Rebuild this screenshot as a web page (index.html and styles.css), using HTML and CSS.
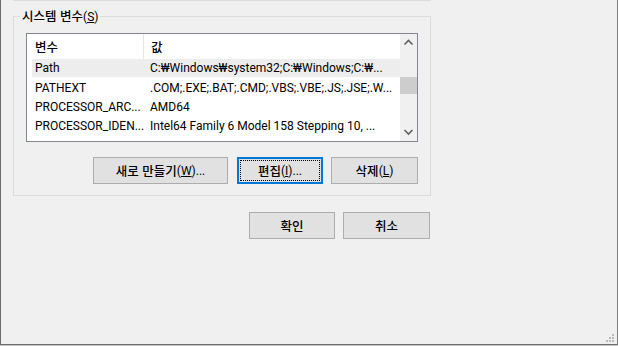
FILE: index.html
```html
<!DOCTYPE html>
<html lang="ko">
<head>
<meta charset="utf-8">
<link rel="stylesheet" href="styles.css">
</head>
<body>
<div class="window">
  <div class="prev-group"></div>
  <div class="group">
    <div class="group-title"><span class="ko">시스템 변수</span>(<u>S</u>)</div>
    <div class="list">
      <div class="list-body">
        <div class="header">
          <div class="hcol1"><span class="ko">변수</span></div>
          <div class="hcol2"><span class="ko">값</span></div>
        </div>
        <div class="row selected">
          <div class="col1">Path</div>
          <div class="col2">C:₩Windows₩system32;C:₩Windows;C:₩...</div>
        </div>
        <div class="row">
          <div class="col1">PATHEXT</div>
          <div class="col2">.COM;.EXE;.BAT;.CMD;.VBS;.VBE;.JS;.JSE;.W...</div>
        </div>
        <div class="row">
          <div class="col1">PROCESSOR_ARC...</div>
          <div class="col2">AMD64</div>
        </div>
        <div class="row">
          <div class="col1">PROCESSOR_IDEN...</div>
          <div class="col2">Intel64 Family 6 Model 158 Stepping 10, ...</div>
        </div>
      </div>
      <div class="scrollbar">
        <div class="sb-arrow">
          <svg width="17" height="17" viewBox="0 0 17 17"><polyline points="4.5,10.5 8.5,6.5 12.5,10.5" fill="none" stroke="#606060" stroke-width="1.6"/></svg>
        </div>
        <div class="sb-track"><div class="sb-thumb"></div></div>
        <div class="sb-arrow">
          <svg width="17" height="17" viewBox="0 0 17 17"><polyline points="4.5,6 8.5,10 12.5,6" fill="none" stroke="#606060" stroke-width="1.6"/></svg>
        </div>
      </div>
    </div>
    <div class="btn-row">
      <button class="btn btn-new"><span class="ko">새로 만들기</span>(<u>W</u>)...</button>
      <button class="btn btn-focus"><span class="ko">편집</span>(<u>I</u>)...</button>
      <button class="btn btn-del"><span class="ko">삭제</span>(<u>L</u>)</button>
    </div>
  </div>
  <div class="dialog-buttons">
    <button class="btn"><span class="ko">확인</span></button>
    <button class="btn btn-cancel"><span class="ko">취소</span></button>
  </div>
  <svg class="grip" width="9" height="9" viewBox="0 0 9 9">
    <rect x="6" y="0" width="2" height="2" fill="#b9b9b9"/>
    <rect x="3" y="3" width="2" height="2" fill="#b9b9b9"/>
    <rect x="6" y="3" width="2" height="2" fill="#b9b9b9"/>
    <rect x="0" y="6" width="2" height="2" fill="#b9b9b9"/>
    <rect x="3" y="6" width="2" height="2" fill="#b9b9b9"/>
    <rect x="6" y="6" width="2" height="2" fill="#b9b9b9"/>
  </svg>
</div>
</body>
</html>
```
FILE: styles.css
```css
html, body {
  margin: 0;
  padding: 0;
  background: #c4c4c4;
}
.window {
  position: relative;
  width: 618px;
  height: 345px;
  box-sizing: border-box;
  background: #f0f0f0;
  border-left: 1px solid #6b6b6b;
  border-right: 1px solid #7e7e7e;
  border-bottom: 1px solid #6e6e6e;
  font-family: Roboto, "Noto Sans CJK KR", sans-serif;
  font-size: 12px;
  color: #000;
  overflow: hidden;
}
.ko {
  font-family: "Noto Sans CJK KR", sans-serif;
  font-size: 12.5px;
  font-weight: 500;
}
.prev-group {
  margin-left: 12px;
  width: 418px;
  height: 0;
  border-bottom: 1px solid #dcdcdc;
}
.group {
  position: relative;
  margin: 15px 0 0 12px;
  width: 418px;
  box-sizing: border-box;
  border: 1px solid #dcdcdc;
  padding: 16px 12px 11px 12px;
}
.group-title {
  position: absolute;
  left: 6px;
  top: -9px;
  padding: 0 2px;
  line-height: 16px;
  background: #f0f0f0;
}
.list {
  display: flex;
  width: 392px;
  height: 109px;
  box-sizing: border-box;
  border: 1px solid #828790;
  background: #fff;
}
.list-body {
  flex: 1;
  overflow: hidden;
}
.header {
  display: flex;
  height: 25px;
  align-items: center;
}
.hcol1 {
  width: 108px;
  height: 100%;
  padding-left: 8px;
  border-right: 1px solid #e5e5e5;
  display: flex;
  align-items: center;
}
.hcol2 {
  padding-left: 7px;
}
.row {
  display: flex;
  align-items: center;
  height: 19px;
  margin-left: 5px;
  white-space: nowrap;
}
.row.selected {
  background: #ededed;
  height: 18px;
  margin-bottom: 1px;
}
.col1 {
  width: 109px;
  padding-left: 3px;
  overflow: hidden;
}
.col2 {
  padding-left: 6px;
  overflow: hidden;
}
.scrollbar {
  width: 17px;
  display: flex;
  flex-direction: column;
  background: #f0f0f0;
}
.sb-arrow {
  height: 17px;
}
.sb-arrow svg {
  display: block;
}
.sb-track {
  flex: 1;
}
.sb-thumb {
  margin-top: 26px;
  height: 17px;
  background: #cdcdcd;
}
.btn-row {
  display: flex;
  justify-content: flex-end;
  gap: 8px;
  margin-top: 15px;
}
.btn {
  width: 86px;
  height: 27px;
  box-sizing: border-box;
  margin: 0;
  padding: 0;
  background: #e1e1e1;
  border: 1px solid #adadad;
  font: inherit;
  color: #000;
  display: flex;
  align-items: center;
  justify-content: center;
  white-space: nowrap;
}
.btn-new {
  width: 135px;
  margin-right: 1px;
}
.btn-del {
  width: 87px;
}
.btn-cancel {
  width: 87px;
}
.btn-focus {
  border-color: #0078d7;
  box-shadow: inset 0 0 0 1px #0078d7;
  outline: 1px dotted #000;
  outline-offset: -4px;
}
.dialog-buttons {
  display: flex;
  justify-content: flex-end;
  gap: 8px;
  margin: 16px 0 0 12px;
  width: 417px;
}
.grip {
  position: absolute;
  right: 2px;
  bottom: 1px;
  display: block;
}
```
